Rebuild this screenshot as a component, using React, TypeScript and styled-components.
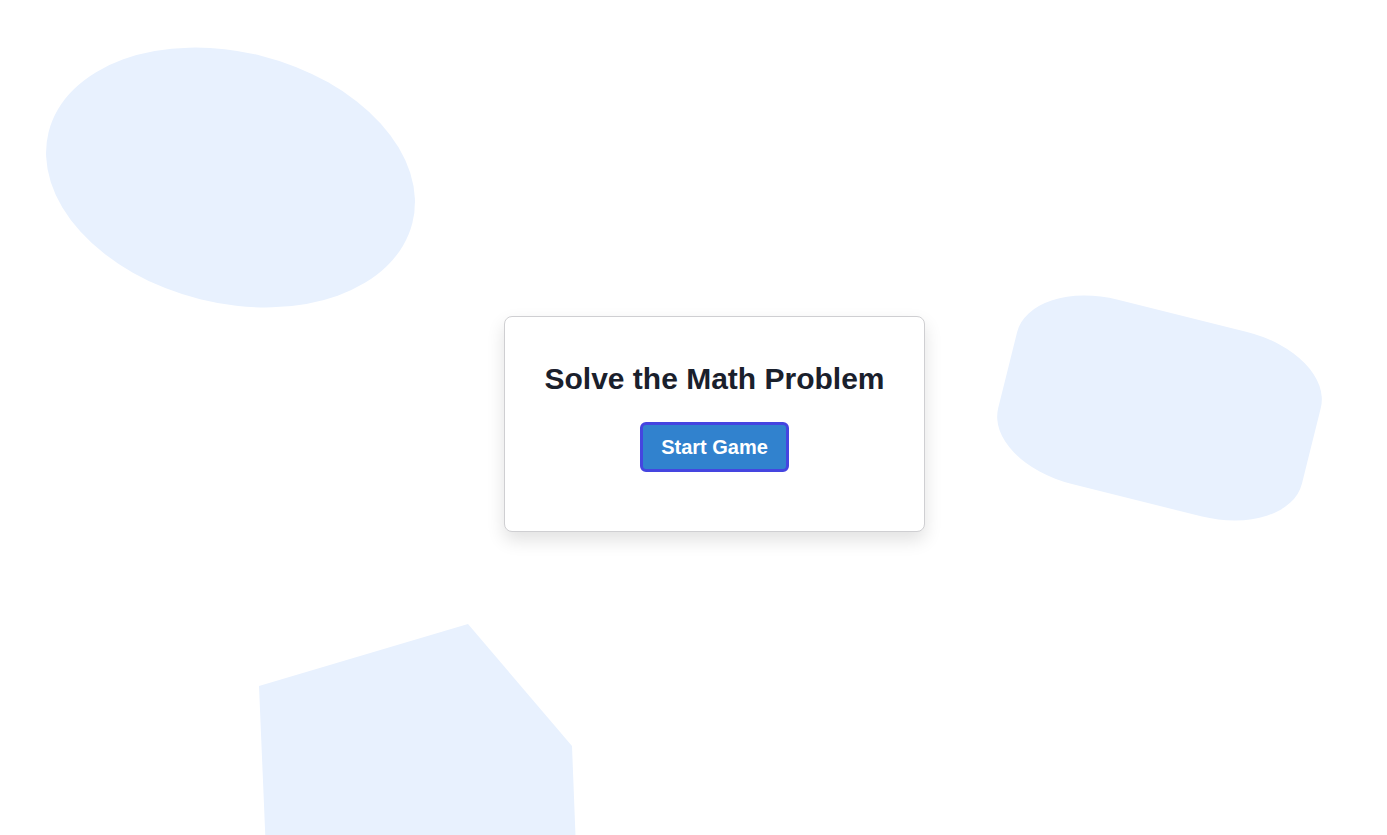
import React from "react";
import styled, { createGlobalStyle } from "styled-components";

const GlobalStyle = createGlobalStyle`
  html, body {
    margin: 0;
    padding: 0;
    background: #ffffff;
    font-family: "Liberation Sans", Arial, sans-serif;
  }
  * { box-sizing: border-box; }
`;

const Page = styled.div`
  position: relative;
  width: 100%;
  height: 100vh;
  overflow: hidden;
  display: flex;
  align-items: center;
  justify-content: center;
  padding: 13px 0 0 42px;
  background: #ffffff;
`;

const Backdrop = styled.div`
  position: absolute;
  inset: 0;
  pointer-events: none;
`;

const Blob = styled.div<{ $left: number; $top: number; $w: number; $h: number; $rot: number; $radius: string }>`
  position: absolute;
  left: ${(p) => p.$left}px;
  top: ${(p) => p.$top}px;
  width: ${(p) => p.$w}px;
  height: ${(p) => p.$h}px;
  border-radius: ${(p) => p.$radius};
  background: #e8f1fe;
  transform: rotate(${(p) => p.$rot}deg);
`;

const Polygon = styled.svg`
  position: absolute;
  left: 0;
  top: 0;
  width: 100%;
  height: 100%;
`;

const Card = styled.div`
  position: relative;
  z-index: 1;
  width: 421px;
  height: 216px;
  display: flex;
  flex-direction: column;
  align-items: center;
  gap: 26px;
  padding: 45px 40px 0;
  background: #ffffff;
  border: 1px solid #cfcfd2;
  border-radius: 8px;
  box-shadow: 0 8px 18px rgba(0, 0, 0, 0.12);
`;

const Title = styled.h2`
  margin: 0;
  font-size: 30px;
  font-weight: 700;
  line-height: normal;
  color: #1a202c;
  white-space: nowrap;
`;

const StartButton = styled.button`
  font-family: "Liberation Sans", Arial, sans-serif;
  font-size: 20px;
  font-weight: 700;
  line-height: 24px;
  color: #ffffff;
  background: #3182ce;
  border: 3px solid #4545e0;
  border-radius: 6px;
  padding: 10px 18px;
  cursor: pointer;
`;

export default function App() {
  return (
    <>
      <GlobalStyle />
      <Page>
        <Backdrop>
          <Blob $left={43} $top={52} $w={375} $h={251} $rot={14} $radius="50%" />
          <Blob $left={1003} $top={313} $w={313} $h={190} $rot={14} $radius="90px / 56px" />
          <Polygon viewBox="0 0 1387 835" preserveAspectRatio="none">
            <polygon points="259,686 468,624 572,746 578,900 268,900" fill="#e8f1fe" />
          </Polygon>
        </Backdrop>
        <Card>
          <Title>Solve the Math Problem</Title>
          <StartButton>Start Game</StartButton>
        </Card>
      </Page>
    </>
  );
}
